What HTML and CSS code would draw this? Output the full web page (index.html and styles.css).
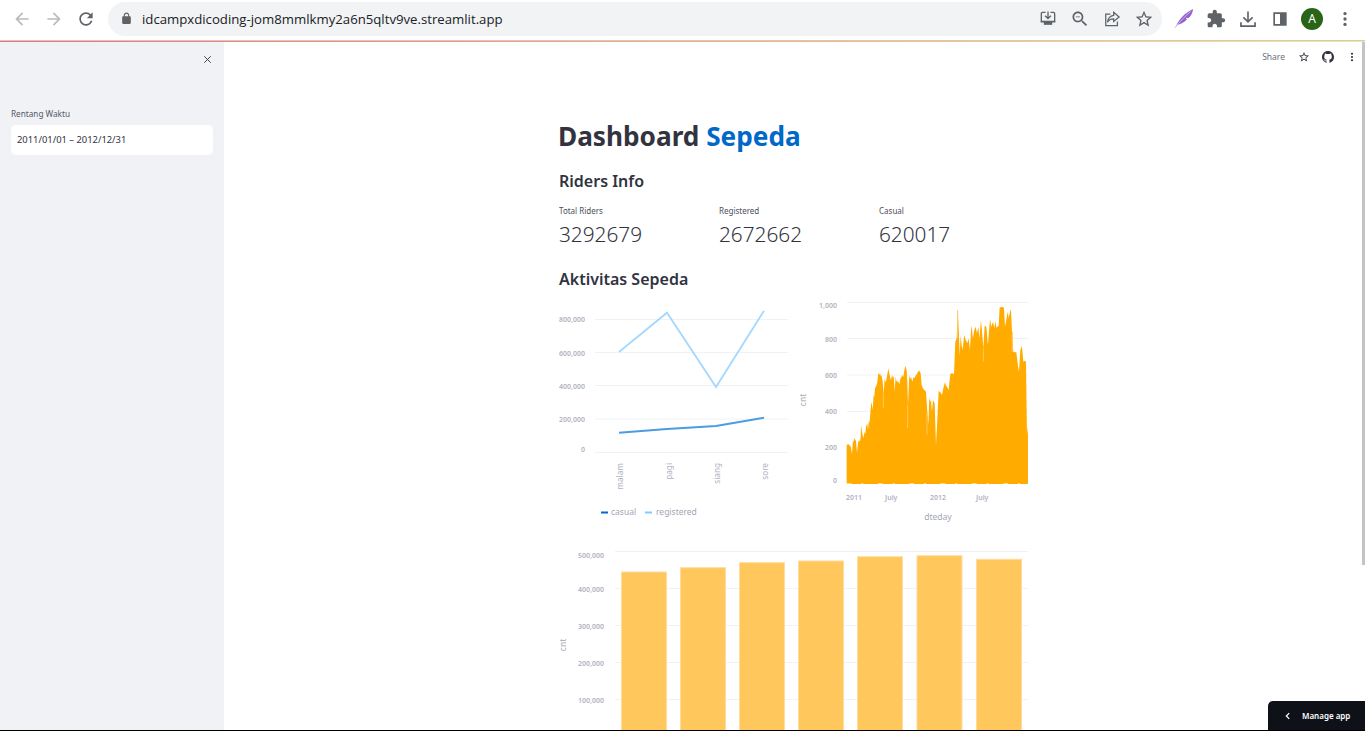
FILE: index.html
```html
<!DOCTYPE html>
<html lang="id">
<head>
  <meta charset="UTF-8">
  <meta name="viewport" content="width=device-width, initial-scale=1.0">
  <title>Dashboard Sepeda</title>
  <link rel="stylesheet" href="styles.css">
</head>
<body>
  <div class="browser-bar">
    <div class="nav-icons">
      <svg class="icon icon-off" viewBox="0 0 24 24"><path d="M20 11H7.830l5.590-5.590L12 4l-8 8 8 8 1.410-1.410L7.830 13H20v-2z"/></svg>
      <svg class="icon icon-off" viewBox="0 0 24 24"><path d="M12 4l-1.410 1.410L16.170 11H4v2h12.170l-5.580 5.590L12 20l8-8z"/></svg>
      <svg class="icon" viewBox="0 0 24 24"><path d="M17.650 6.350C16.200 4.900 14.210 4 12 4c-4.420 0-7.990 3.580-7.990 8s3.570 8 7.990 8c3.730 0 6.840-2.550 7.730-6h-2.080c-.82 2.330-3.040 4-5.650 4-3.310 0-6-2.690-6-6s2.690-6 6-6c1.660 0 3.140.69 4.220 1.780L13 11h7V4l-2.350 2.350z"/></svg>
    </div>
    <div class="url-box">
      <svg class="lock" viewBox="0 0 24 24"><path d="M18 8h-1V6c0-2.760-2.240-5-5-5S7 3.240 7 6v2H6c-1.100 0-2 .9-2 2v10c0 1.100.9 2 2 2h12c1.100 0 2-.9 2-2V10c0-1.100-.9-2-2-2zM9 6c0-1.660 1.340-3 3-3s3 1.340 3 3v2H9V6z"/></svg>
      <span class="url-text">idcampxdicoding-jom8mmlkmy2a6n5qltv9ve.streamlit.app</span>
      <div class="url-icons">
        <svg class="icon" viewBox="0 0 24 24"><path d="M9 4H5.500A1.500 1.500 0 0 0 4 5.500V15h16V5.500A1.500 1.500 0 0 0 18.500 4H15M12 3v8M8.500 8l3.500 3.500L15.500 8M3 15.500h18" fill="none" stroke="#5f6368" stroke-width="1.600"/><rect x="7" y="15" width="10" height="4"/></svg>
        <svg class="icon" viewBox="0 0 24 24"><path d="M15.500 14h-.79l-.28-.27C15.410 12.590 16 11.110 16 9.500 16 5.910 13.090 3 9.500 3S3 5.910 3 9.500 5.910 16 9.500 16c1.610 0 3.090-.59 4.230-1.570l.27.28v.79l5 4.990L20.490 19l-4.990-5zm-6 0C7.010 14 5 11.990 5 9.500S7.010 5 9.500 5 14 7.010 14 9.500 11.990 14 9.500 14zM7 9h5v1H7z"/></svg>
        <svg class="icon" viewBox="0 0 24 24"><path d="M10 6H4.500v14h14v-5M14 4l6.500 5.500-6.500 5.500v-3.200c-3.500 0-6 1.200-7.500 4.200 .5-4.500 3-7.500 7.500-8.300z" fill="none" stroke="#5f6368" stroke-width="1.500"/></svg>
        <svg class="icon" viewBox="0 0 24 24"><path d="M22 9.240l-7.190-.62L12 2 9.190 8.630 2 9.240l5.460 4.730L5.820 21 12 17.270 18.180 21l-1.630-7.030L22 9.240zM12 15.400l-3.760 2.270 1-4.280-3.320-2.880 4.380-.38L12 6.100l1.710 4.040 4.380.38-3.320 2.880 1 4.280L12 15.400z"/></svg>
      </div>
    </div>
    <div class="ext-icons">
      <svg class="icon" viewBox="0 0 24 24"><path d="M1 23C5 15 10 6 23 0c-1 6-3 9-6 11l-3-.5 1.500 2C12 16 8 18 4 19z" fill="#9560cf"/><path d="M1 23C7 15 13 9 20 3" fill="none" stroke="#dcc8f0" stroke-width="1"/></svg>
      <svg class="icon" viewBox="0 0 24 24"><path d="M20.500 11H19V7c0-1.100-.9-2-2-2h-4V3.500C13 2.120 11.880 1 10.500 1S8 2.120 8 3.500V5H4c-1.100 0-1.990.9-1.990 2v3.800H3.500c1.490 0 2.700 1.210 2.700 2.700s-1.210 2.700-2.700 2.700H2V20c0 1.100.9 2 2 2h3.800v-1.500c0-1.490 1.210-2.700 2.700-2.700 1.490 0 2.700 1.210 2.700 2.700V22H17c1.100 0 2-.9 2-2v-4h1.500c1.380 0 2.500-1.120 2.500-2.500S21.880 11 20.500 11z"/></svg>
      <svg class="icon" viewBox="0 0 24 24"><path d="M12 3v12M6.500 10l5.500 5.500 5.500-5.500M3.500 16v4.500h17V16" fill="none" stroke="#5f6368" stroke-width="2"/></svg>
      <svg class="icon" viewBox="0 0 24 24"><path d="M4 4h16v16H4zM6 6v12h6V6z" fill-rule="evenodd"/></svg>
      <div class="avatar">A</div>
      <svg class="icon" viewBox="0 0 24 24"><circle cx="12" cy="5.500" r="2"/><circle cx="12" cy="12" r="2"/><circle cx="12" cy="18.500" r="2"/></svg>
    </div>
  </div>
  <div class="deco-line"></div>

  <div class="app">
    <aside class="sidebar">
      <div class="sidebar-close">
        <svg viewBox="0 0 24 24"><path d="M5 5l14 14M19 5L5 19" fill="none" stroke="#31333f" stroke-width="2"/></svg>
      </div>
      <div class="field-label">Rentang Waktu</div>
      <div class="date-input">2011/01/01 – 2012/12/31</div>
    </aside>

    <main class="main">
      <div class="top-actions">
        <span class="share">Share</span>
        <svg viewBox="0 0 24 24"><path d="M22 9.240l-7.190-.62L12 2 9.190 8.630 2 9.240l5.460 4.730L5.820 21 12 17.270 18.180 21l-1.630-7.030L22 9.240zM12 15.400l-3.760 2.270 1-4.280-3.320-2.880 4.380-.38L12 6.100l1.710 4.040 4.380.38-3.320 2.880 1 4.280L12 15.400z"/></svg>
        <svg viewBox="0 0 16 16"><path d="M8 0C3.580 0 0 3.580 0 8c0 3.540 2.290 6.530 5.470 7.590.4.07.55-.17.55-.38 0-.19-.01-.82-.01-1.490-2.010.37-2.530-.49-2.690-.94-.09-.23-.48-.94-.82-1.130-.28-.15-.68-.52-.01-.53.63-.01 1.080.58 1.230.82.72 1.210 1.870.87 2.330.66.07-.52.28-.87.51-1.070-1.780-.2-3.640-.89-3.640-3.950 0-.87.31-1.590.82-2.150-.08-.2-.36-1.020.08-2.120 0 0 .67-.21 2.200.82.64-.18 1.320-.27 2-.27s1.360.09 2 .27c1.530-1.040 2.200-.82 2.200-.82.44 1.100.16 1.920.08 2.120.51.56.82 1.270.82 2.150 0 3.070-1.870 3.750-3.650 3.950.29.25.54.73.54 1.480 0 1.070-.01 1.930-.01 2.200 0 .21.15.46.55.38A8.010 8.010 0 0 0 16 8c0-4.420-3.580-8-8-8z"/></svg>
        <svg viewBox="0 0 24 24"><circle cx="12" cy="5.500" r="2.200"/><circle cx="12" cy="12" r="2.200"/><circle cx="12" cy="18.500" r="2.200"/></svg>
      </div>

      <div class="content">
        <h1 class="title">Dashboard <span class="title-blue">Sepeda</span></h1>
        <h3 class="subtitle">Riders Info</h3>
        <div class="metrics">
          <div class="metric">
            <div class="metric-label">Total Riders</div>
            <div class="metric-value">3292679</div>
          </div>
          <div class="metric">
            <div class="metric-label">Registered</div>
            <div class="metric-value">2672662</div>
          </div>
          <div class="metric">
            <div class="metric-label">Casual</div>
            <div class="metric-value">620017</div>
          </div>
        </div>
        <h3 class="subtitle subtitle-second">Aktivitas Sepeda</h3>

        <div class="chart-row">
          <svg class="chart chart-half" viewBox="559 295 235 235">
            <g class="grid">
              <path d="M595 319.500H788M595 352.500H788M595 385.500H788M595 419H788M595 452.500H788"/>
            </g>
            <g class="axis-text" text-anchor="end">
              <text x="585" y="322">800,000</text>
              <text x="585" y="356">600,000</text>
              <text x="585" y="389">400,000</text>
              <text x="585" y="422">200,000</text>
              <text x="585" y="452">0</text>
              <text class="axis-cat" transform="translate(623 463) rotate(-90)">malam</text>
              <text class="axis-cat" transform="translate(672 463) rotate(-90)">pagi</text>
              <text class="axis-cat" transform="translate(720 463) rotate(-90)">siang</text>
              <text class="axis-cat" transform="translate(768 463) rotate(-90)">sore</text>
            </g>
            <polyline class="line-registered" points="619,352 667,312.700 716,387 764,310.700"/>
            <polyline class="line-casual" points="619,432.700 667,429 716,426 764,417.700"/>
            <path class="legend-casual" d="M601 512.500H608"/>
            <g class="axis-text">
              <text class="axis-title" x="611" y="515">casual</text>
              <text class="axis-title" x="656" y="515">registered</text>
            </g>
            <path class="legend-registered" d="M645 512.500H652"/>
          </svg>

          <svg class="chart chart-half" viewBox="794 295 235 235">
            <g class="grid">
              <path d="M847 302.500H1028M847 338.500H1028M847 375H1028M847 411.500H1028M847 447.500H1028"/>
            </g>
            <g class="axis-text" text-anchor="end">
              <text x="837" y="308">1,000</text>
              <text x="837" y="342">800</text>
              <text x="837" y="378">600</text>
              <text x="837" y="414">400</text>
              <text x="837" y="450">200</text>
              <text x="837" y="483">0</text>
              <text transform="translate(806 400) rotate(-90)" text-anchor="middle" class="axis-title">cnt</text>
            </g>
            <g transform="translate(795 295) scale(.3333)">
              <path class="area" d="M155 567V450L160 447 163 452 165 450 168 458 171 478 174 435 176 442 178 430 183 438 186 475 189 445 192 435 195 440 197 425 198 390 201 410 203 420 205 430 209 410 211 418 213 395 217 385 219 405 222 375 224 385 226 355 229 320 231 330 233 345 236 300 238 305 240 280 244 272 247 262 250 233 253 240 255 235 258 245 260 240 263 260 266 297 269 252 272 262 274 255 277 238 280 220 284 240 286 250 288 255 291 240 294 248 296 242 299 290 302 245 304 255 306 262 309 258 313 268 316 252 318 248 323 240 325 246 327 232 331 212 335 225 337 260 339 330 343 240 346 252 348 245 352 260 356 245 359 250 362 242 367 235 372 226 377 235 380 270 384 280 388 285 393 290 397 350 400 390 403 308 406 320 408 316 411 350 414 315 417 322 419 325 423 450 426 395 431 288 436 292 441 300 445 280 450 262 453 272 456 275 461 285 466 236 472 235 477 238 481 140 485 130 488 45 492 120 494 182 497 120 500 150 503 165 506 135 508 120 512 135 517 145 521 130 525 165 529 90 534 130 538 105 542 95 546 115 550 95 553 130 558 76 562 120 565 160 569 92 574 95 579 150 582 110 585 72 589 95 594 80 598 100 601 78 604 98 611 92 614 38 620 35 627 38 630 95 634 75 638 50 641 70 644 55 648 42 651 110 655 170 660 172 664 172 668 205 672 232 676 165 681 153 685 200 690 197 693 200 696 420 699 395 699 567z"/>
              <path class="area-gaps" d="M488 45V130M265 295V340M338 330V400M565 160V200M396 350V420M652 110V170"/>
              <path class="area-base" d="M155 566H699"/>
            </g>
            <g class="axis-text">
              <text x="846" y="500">2011</text>
              <text x="885" y="500">July</text>
              <text x="930" y="500">2012</text>
              <text x="976" y="500">July</text>
              <text class="axis-title" x="938" y="520" text-anchor="middle">dteday</text>
            </g>
          </svg>
        </div>

        <svg class="chart chart-full" viewBox="559 545 470 190">
          <g class="grid">
            <path d="M615 551.500H1028M615 588.500H1028M615 625.500H1028M615 662.500H1028M615 699.500H1028"/>
          </g>
          <g class="axis-text" text-anchor="end">
            <text x="604" y="558">500,000</text>
            <text x="604" y="592">400,000</text>
            <text x="604" y="629">300,000</text>
            <text x="604" y="666">200,000</text>
            <text x="604" y="703">100,000</text>
            <text transform="translate(566 645) rotate(-90)" text-anchor="middle" class="axis-title">cnt</text>
          </g>
          <g class="bars">
            <rect x="621.500" y="572" width="45" height="180"/>
            <rect x="680.500" y="567.700" width="45" height="180"/>
            <rect x="739.500" y="562.700" width="45" height="180"/>
            <rect x="798.500" y="561" width="45" height="180"/>
            <rect x="857.500" y="556.700" width="45" height="180"/>
            <rect x="917" y="555.700" width="45" height="180"/>
            <rect x="976.500" y="559.300" width="45" height="180"/>
          </g>
        </svg>
      </div>

      <div class="scroll-thumb"></div>
      <div class="manage-app">
        <svg viewBox="0 0 24 24"><path d="M15 5l-7 7 7 7" fill="none" stroke="#fff" stroke-width="3"/></svg>
        <span>Manage app</span>
      </div>
    </main>
  </div>
  <div class="bottom-line"></div>
</body>
</html>
```

FILE: styles.css
```css
* {
  box-sizing: border-box;
}
body {
  margin: 0;
  height: 100vh;
  overflow: hidden;
  display: flex;
  flex-direction: column;
  font-family: "Noto Sans", sans-serif;
  color: #31333f;
  background-color: #fff;
}

/* browser chrome */
.browser-bar {
  height: 41px;
  flex: none;
  display: flex;
  align-items: center;
  padding: 0 11px 3px 12px;
  border-bottom: 1px solid #c9cbce;
  background-color: #fff;
}
.icon {
  width: 20px;
  height: 20px;
  fill: #5f6368;
  flex: none;
}
.icon-off {
  fill: #b9bbbe;
}
.nav-icons {
  display: flex;
  flex: none;
  gap: 12px;
  width: 96px;
}
.url-box {
  width: 1054px;
  height: 34px;
  flex: none;
  display: flex;
  align-items: center;
  padding: 0 8px 0 12px;
  border-radius: 17px;
  background-color: #f1f3f4;
}
.lock {
  width: 13px;
  height: 13px;
  margin-right: 9px;
  fill: #5f6368;
}
.url-text {
  font-family: "Open Sans", sans-serif;
  font-size: 13.200px;
  color: #202124;
}
.url-icons {
  display: flex;
  gap: 12px;
  margin-left: auto;
}
.ext-icons {
  display: flex;
  flex: none;
  align-items: center;
  gap: 12px;
  margin-left: 12px;
}
.avatar {
  width: 22px;
  height: 22px;
  border-radius: 50%;
  margin: 0 0 0 -1px;
  background-color: #2a6417;
  color: #fff;
  font-size: 12px;
  line-height: 22px;
  text-align: center;
}
.deco-line {
  height: 1px;
  flex: none;
  background: linear-gradient(90deg, #ff6b6b, #ffe680);
}

/* streamlit app */
.app {
  flex: 1;
  min-height: 0;
  display: flex;
}
.sidebar {
  width: 224px;
  flex: none;
  padding: 10px 11px 0 11px;
  background-color: #f0f2f6;
}
.sidebar-close {
  display: flex;
  justify-content: flex-end;
  height: 55px;
}
.sidebar-close svg {
  width: 11px;
  height: 11px;
  margin-top: 2px;
}
.field-label {
  font-size: 8.200px;
  line-height: 13px;
  margin-bottom: 5px;
  color: #555867;
}
.date-input {
  height: 30px;
  padding-left: 6px;
  border-radius: 5px;
  background-color: #fff;
  font-size: 9.400px;
  line-height: 29px;
}
.main {
  flex: 1;
  min-width: 0;
  position: relative;
  overflow: hidden;
}
.top-actions {
  height: 29px;
  display: flex;
  align-items: center;
  justify-content: flex-end;
  gap: 12px;
  padding-right: 7px;
}
.top-actions svg {
  width: 12px;
  height: 12px;
  fill: #31333f;
}
.share {
  font-size: 8.500px;
  color: #6d7080;
  margin-right: 1px;
}
.content {
  width: 471px;
  margin: 0 auto;
  padding-top: 47px;
}
.title {
  margin: 0 0 0 -1px;
  font-size: 26.200px;
  line-height: 37px;
  font-weight: 700;
}
.title-blue {
  color: #0068c9;
}
.subtitle {
  margin: 14px 0 0 0;
  font-size: 16px;
  line-height: 24px;
  font-weight: 600;
}
.subtitle-second {
  margin-top: 16px;
}
.metrics {
  display: flex;
  margin-top: 11px;
}
.metric {
  width: 160px;
  flex: none;
}
.metric-label {
  font-size: 8px;
  line-height: 13px;
  color: #4c4f5c;
}
.metric-value {
  font-size: 20.800px;
  font-weight: 300;
  line-height: 34px;
}
.chart-row {
  display: flex;
  margin-top: 4px;
}
.chart {
  display: block;
  flex: none;
  overflow: visible;
}
.chart-half {
  width: 235px;
  height: 235px;
}
.chart-full {
  width: 470px;
  height: 190px;
  margin-top: 15px;
}
.grid path {
  fill: none;
  stroke: #f0f2f6;
  stroke-width: 1;
}
.axis-text {
  opacity: .99;
}
.axis-text text {
  font-size: 7px;
  fill: #b0b3c0;
  font-weight: 600;
}
.axis-text .axis-cat {
  font-size: 8.200px;
  font-weight: 400;
}
.axis-text .axis-title {
  font-size: 8.500px;
  font-weight: 400;
  fill: #a3a6b4;
}
.line-registered {
  fill: none;
  stroke: #a6d8ff;
  stroke-width: 1.800;
}
.line-casual {
  fill: none;
  stroke: #4d9be0;
  stroke-width: 2;
}
.legend-casual {
  stroke: #0068c9;
  stroke-width: 2;
}
.legend-registered {
  stroke: #83c9ff;
  stroke-width: 2;
}
.area {
  fill: #ffab00;
}
.area-gaps {
  fill: none;
  stroke: #ffc85c;
  stroke-width: 3;
}
.area-base {
  fill: none;
  stroke: #fff;
  stroke-width: 2;
  stroke-dasharray: 14 30 6 44;
}
.bars rect {
  fill: #ffc75c;
  stroke: #ffdc9c;
  stroke-width: 1;
}
.scroll-thumb {
  position: absolute;
  top: 0;
  right: 0;
  width: 3px;
  height: 523px;
  background-color: #c4c4c4;
}
.manage-app {
  position: absolute;
  right: 0;
  bottom: 0;
  width: 97px;
  height: 29px;
  display: flex;
  align-items: center;
  gap: 9px;
  padding-left: 15px;
  border-top-left-radius: 5px;
  background-color: #0e1117;
  color: #fff;
  font-size: 8px;
  font-weight: 600;
}
.manage-app svg {
  width: 10px;
  height: 10px;
}
.bottom-line {
  height: 1px;
  flex: none;
  background-color: #000;
}
```
